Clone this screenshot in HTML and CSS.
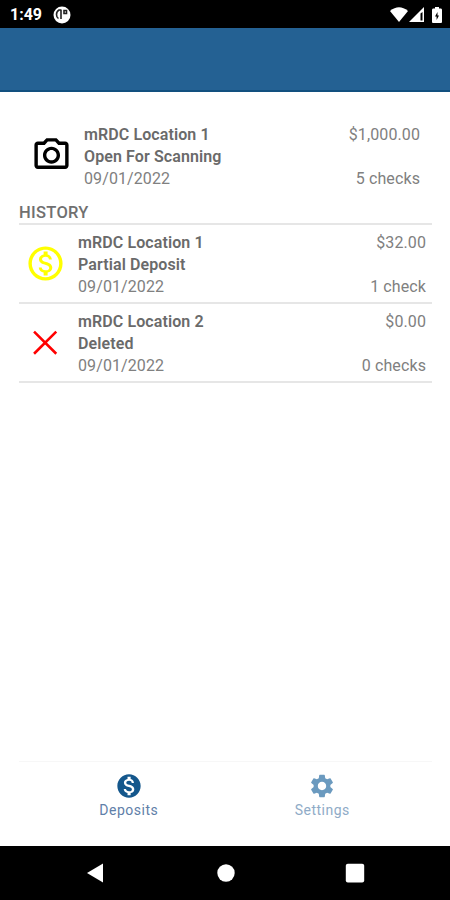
FILE: index.html
```html
<!DOCTYPE html>
<html lang="en">
  <head>
    <meta charset="UTF-8" />
    <meta name="viewport" content="width=device-width, initial-scale=1.0" />
    <title>Deposits</title>
    <link rel="stylesheet" href="styles.css">
  </head>
  <body>
    <div class="status-bar">
      <span class="time">1:49</span>
      <svg class="app-icon" viewBox="0 0 18 18">
        <circle cx="9" cy="9" r="8.5" fill="#fff" />
        <path d="M8.500 4H6Q3.500 5.500 3.500 8.500Q3.500 11.500 5.500 12.500M8 4V13M11 4.500H13.500V7.500H11Z" fill="none" stroke="#222" stroke-width="1.600" />
      </svg>
      <div class="status-icons">
        <svg class="wifi" viewBox="0 0 18 15">
          <path d="M0 4Q9-3.500 18 4L9 15Z" fill="#fff" />
        </svg>
        <svg class="signal" viewBox="0 0 15 15">
          <path d="M0 15L15 0V15Z" fill="#fff" />
          <path d="M11.500 6.500L13.500 5V13.500H11.500Z" fill="#000" />
        </svg>
        <svg class="battery" viewBox="0 0 10 16">
          <path d="M3 0H7V1.500H9Q10 1.500 10 3V15Q10 16 9 16H1Q0 16 0 15V3Q0 1.500 1 1.500H3Z" fill="#fff" />
          <path d="M5.500 5L3 9.500H4.600V13L7 8.500H5.500Z" fill="#000" />
        </svg>
      </div>
    </div>

    <header class="header"></header>

    <main class="content">
      <div class="deposit current">
        <svg class="icon" viewBox="0 0 24 24">
          <path d="M20 5h-3.170L15 3H9L7.170 5H4c-1.100 0-2 .9-2 2v12c0 1.100.9 2 2 2h16c1.100 0 2-.9 2-2V7c0-1.100-.9-2-2-2zm0 14H4V7h4.050l1.830-2h4.240l1.830 2H20v12zM12 8c-2.760 0-5 2.240-5 5s2.240 5 5 5 5-2.240 5-5-2.240-5-5-5zm0 8c-1.650 0-3-1.350-3-3s1.350-3 3-3 3 1.350 3 3-1.350 3-3 3z" />
        </svg>
        <div class="details">
          <strong>mRDC Location 1</strong>
          <strong>Open For Scanning</strong>
          <span>09/01/2022</span>
        </div>
        <div class="totals">
          <span>$1,000.00</span>
          <span>5 checks</span>
        </div>
      </div>

      <h2 class="section-title">HISTORY</h2>

      <div class="history">
        <div class="deposit">
          <svg class="icon partial" viewBox="0 0 24 24">
            <path d="M12 2C6.480 2 2 6.480 2 12s4.480 10 10 10 10-4.480 10-10S17.520 2 12 2zm0 18c-4.410 0-8-3.590-8-8s3.590-8 8-8 8 3.590 8 8-3.590 8-8 8zm.31-8.860c-1.770-.45-2.340-.94-2.340-1.670 0-.84.79-1.430 2.100-1.430 1.380 0 1.900.66 1.940 1.640h1.710c-.05-1.340-.87-2.570-2.490-2.970V5H10.900v1.690c-1.510.32-2.720 1.300-2.720 2.810 0 1.790 1.490 2.690 3.660 3.210 1.950.46 2.340 1.150 2.340 1.870 0 .53-.39 1.390-2.100 1.390-1.600 0-2.230-.72-2.320-1.640H8.040c.1 1.700 1.360 2.660 2.860 2.970V19h2.340v-1.670c1.520-.29 2.720-1.160 2.730-2.770-.01-2.200-1.900-2.960-3.660-3.420z" />
          </svg>
          <div class="details">
            <strong>mRDC Location 1</strong>
            <strong>Partial Deposit</strong>
            <span>09/01/2022</span>
          </div>
          <div class="totals">
            <span>$32.00</span>
            <span>1 check</span>
          </div>
        </div>

        <div class="deposit">
          <svg class="icon deleted" viewBox="0 0 24 24">
            <path d="M5.300 5.600l13 13m0-13l-13 13" />
          </svg>
          <div class="details">
            <strong>mRDC Location 2</strong>
            <strong>Deleted</strong>
            <span>09/01/2022</span>
          </div>
          <div class="totals">
            <span>$0.00</span>
            <span>0 checks</span>
          </div>
        </div>
      </div>
    </main>

    <nav class="tabs">
      <a class="tab active">
        <svg viewBox="0 0 24 24">
          <path d="M12 2C6.480 2 2 6.480 2 12s4.480 10 10 10 10-4.480 10-10S17.520 2 12 2zm1.410 16.090V20h-2.670v-1.930c-1.710-.36-3.160-1.460-3.270-3.400h1.960c.1 1.050.82 1.870 2.650 1.870 1.960 0 2.400-.98 2.400-1.590 0-.83-.44-1.610-2.670-2.140-2.480-.6-4.180-1.620-4.180-3.670 0-1.720 1.390-2.840 3.110-3.210V4h2.670v1.950c1.860.45 2.790 1.860 2.850 3.390H14.300c-.05-1.110-.64-1.870-2.220-1.870-1.500 0-2.400.68-2.400 1.640 0 .84.65 1.390 2.670 1.910s4.180 1.390 4.180 3.910c-.01 1.830-1.380 2.830-3.120 3.160z" />
        </svg>
        Deposits
      </a>
      <a class="tab">
        <svg viewBox="0 0 24 24">
          <path d="M19.140 12.940c.04-.3.060-.61.060-.94 0-.32-.02-.64-.07-.94l2.030-1.580c.18-.14.23-.41.120-.61l-1.920-3.320c-.12-.22-.37-.29-.59-.22l-2.390.96c-.5-.38-1.030-.7-1.620-.94l-.36-2.540c-.04-.24-.24-.41-.48-.41h-3.840c-.24 0-.43.17-.47.41l-.36 2.540c-.59.24-1.130.57-1.620.94l-2.390-.96c-.22-.08-.47 0-.59.22L2.740 8.870c-.12.21-.08.47.120.61l2.030 1.580c-.05.3-.09.63-.09.94s.02.64.07.94l-2.030 1.580c-.18.14-.23.41-.12.610l1.920 3.320c.12.22.37.29.59.22l2.390-.96c.5.38 1.030.7 1.620.94l.36 2.540c.05.24.24.41.48.41h3.840c.24 0 .44-.17.47-.41l.36-2.540c.59-.24 1.130-.56 1.620-.94l2.390.96c.22.08.47 0 .59-.22l1.920-3.320c.12-.22.07-.47-.12-.61l-2.010-1.580zM12 15.600c-1.980 0-3.600-1.620-3.600-3.600s1.620-3.600 3.600-3.600 3.600 1.620 3.600 3.600-1.620 3.600-3.600 3.600z" />
        </svg>
        Settings
      </a>
    </nav>

    <div class="nav-bar">
      <svg viewBox="0 0 20 20"><path d="M0 10L16 0.500V19.500Z" /></svg>
      <svg viewBox="0 0 20 20"><circle cx="10" cy="10" r="8.700" /></svg>
      <svg viewBox="0 0 20 20"><rect x="0.800" y="0.800" width="18.400" height="18.600" rx="2" /></svg>
    </div>
  </body>
</html>
```

FILE: styles.css
```css
body {
  display: flex;
  flex-direction: column;
  height: 900px;
  margin: 0;
  background-color: #fff;
  font-family: Roboto, sans-serif;
  color: #808080;
}
.status-bar {
  display: flex;
  align-items: center;
  box-sizing: border-box;
  height: 28px;
  padding: 1px 8px 0 10px;
  background-color: #000;
  color: #fff;
}
.time {
  width: 43px;
  font-size: 16px;
  font-weight: 700;
}
.app-icon {
  width: 18px;
  height: 18px;
}
.status-icons {
  display: flex;
  align-items: center;
  margin-left: auto;
}
.wifi {
  width: 18px;
  height: 15px;
}
.signal {
  width: 15px;
  height: 15px;
  margin: 0 8px 0 1px;
}
.battery {
  width: 10px;
  height: 16px;
}
.header {
  box-sizing: border-box;
  height: 64px;
  background-color: #246193;
  border-bottom: 2px solid #12507f;
}
.content {
  flex: 1;
  padding: 32px 18px 0 19px;
}
.deposit {
  display: flex;
  box-sizing: border-box;
  height: 79px;
  padding: 7px 6px 0 6px;
  border-bottom: 2px solid #e6e6e6;
}
.deposit.current {
  height: 79px;
  padding: 0 12px;
  border: none;
}
.icon {
  width: 41px;
  height: 41px;
  margin: 11px 12px 0 0;
}
.current .icon {
  margin-top: 9px;
}
.partial {
  fill: #ff0;
}
.deleted {
  stroke: #f00;
  stroke-width: 1.5;
}
.details,
.totals {
  display: flex;
  flex-direction: column;
  font-size: 16px;
  line-height: 22px;
  letter-spacing: 0.1px;
}
.details strong {
  color: #6a6a6a;
  font-weight: 600;
}
.totals {
  height: 66px;
  margin-left: auto;
  justify-content: space-between;
  text-align: right;
}
.section-title {
  margin: 0;
  height: 20px;
  color: #707070;
  font-size: 16.5px;
  font-weight: 500;
  line-height: 20px;
  letter-spacing: 0.3px;
}
.history {
  border-top: 2px solid #e6e6e6;
}
.tabs {
  display: flex;
  height: 85px;
  margin: 0 18px 0 19px;
  padding: 0 13px;
  box-sizing: border-box;
  border-top: 1px solid #f7f7f7;
}
.tab {
  flex: 1;
  display: flex;
  flex-direction: column;
  align-items: center;
  padding-top: 10px;
  color: #8fabc7;
  font-size: 14px;
  line-height: 21px;
  letter-spacing: 0.5px;
}
.tab svg {
  width: 28px;
  height: 28px;
  fill: #6b9abf;
}
.tab.active {
  color: #5f80a9;
}
.tab.active svg {
  fill: #14578c;
}
.nav-bar {
  display: flex;
  align-items: center;
  justify-content: center;
  gap: 109px;
  height: 54px;
  padding-left: 1px;
  background-color: #000;
}
.nav-bar svg {
  width: 20px;
  height: 20px;
  fill: #fff;
}
```
